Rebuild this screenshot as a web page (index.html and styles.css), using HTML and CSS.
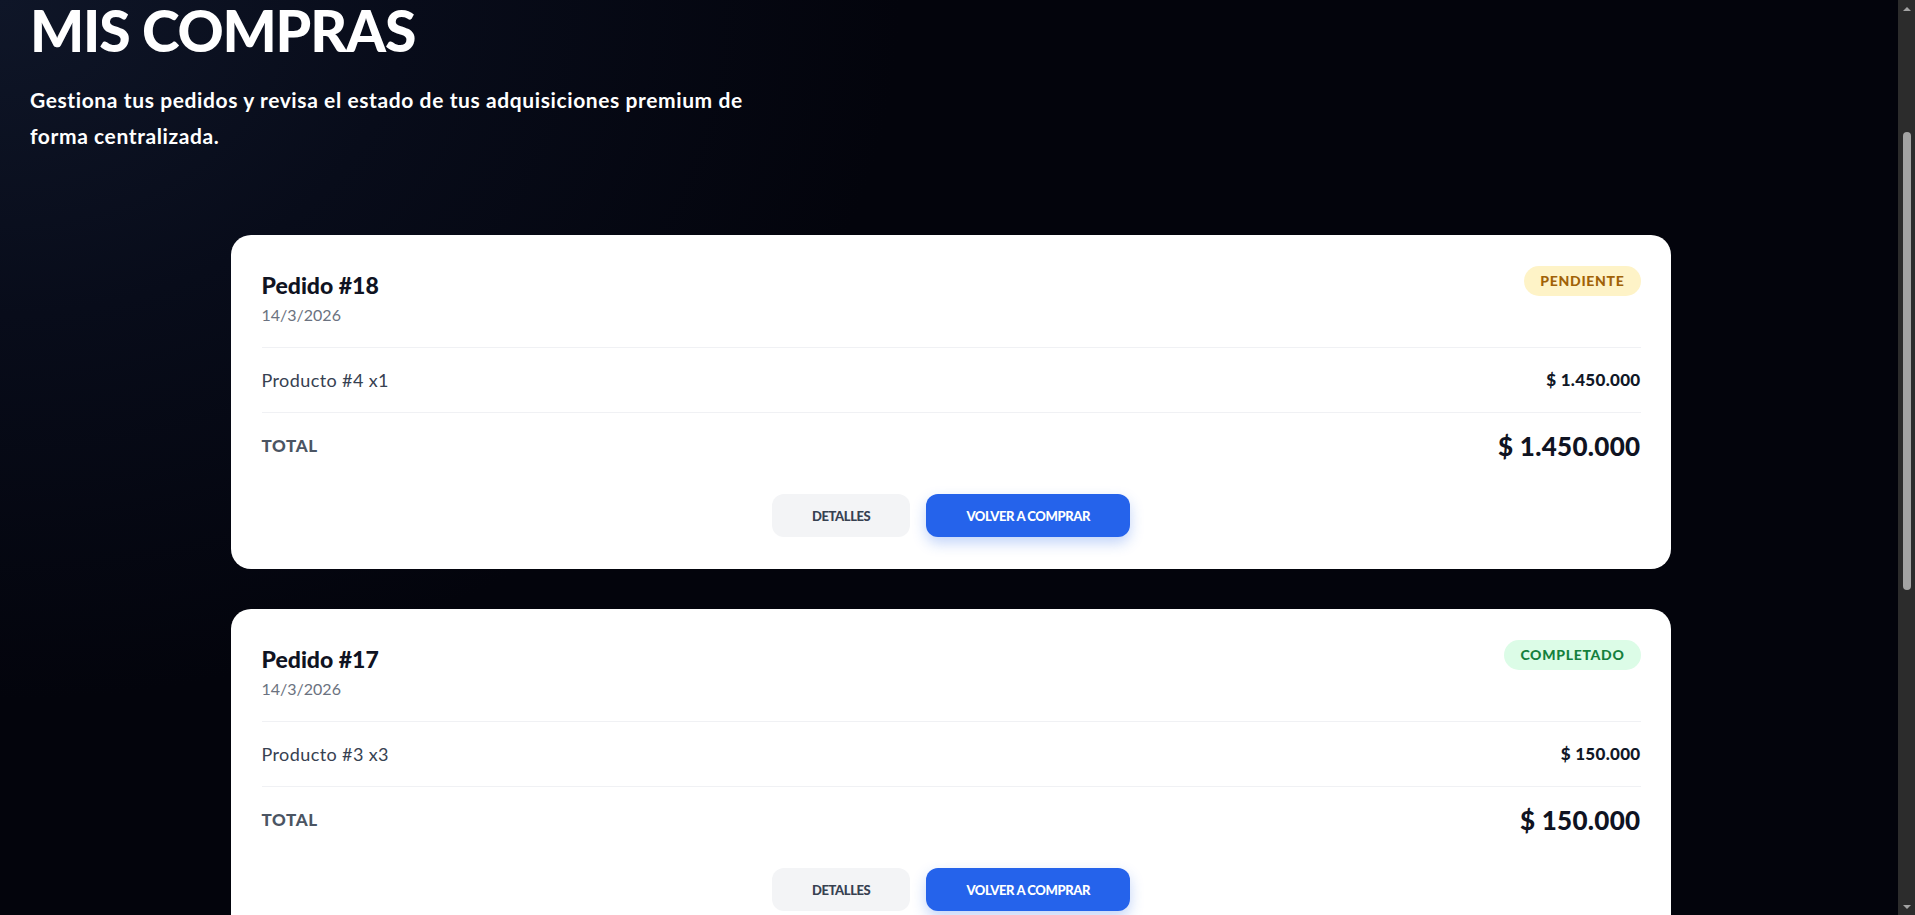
FILE: index.html
```html
<!DOCTYPE html>
<html lang="es">
<head>
<meta charset="utf-8">
<title>Mis compras</title>
<link rel="stylesheet" href="styles.css">
</head>
<body>
<main class="page">
  <header class="page-head">
    <h1 class="page-title">MIS COMPRAS</h1>
    <p class="page-lead">Gestiona tus pedidos y revisa el estado de tus adquisiciones premium de forma centralizada.</p>
  </header>

  <section class="orders">
    <article class="order">
      <div class="order-head">
        <div>
          <h2 class="order-id">Pedido #18</h2>
          <div class="order-date">14/3/2026</div>
        </div>
        <span class="badge badge-pending">PENDIENTE</span>
      </div>
      <div class="order-line">
        <span class="line-name">Producto #4 x1</span>
        <span class="line-price">$ 1.450.000</span>
      </div>
      <div class="order-total">
        <span class="total-label">TOTAL</span>
        <span class="total-price">$ 1.450.000</span>
      </div>
      <div class="order-actions">
        <button class="btn btn-soft">DETALLES</button>
        <button class="btn btn-primary">VOLVER A COMPRAR</button>
      </div>
    </article>

    <article class="order">
      <div class="order-head">
        <div>
          <h2 class="order-id">Pedido #17</h2>
          <div class="order-date">14/3/2026</div>
        </div>
        <span class="badge badge-done">COMPLETADO</span>
      </div>
      <div class="order-line">
        <span class="line-name">Producto #3 x3</span>
        <span class="line-price">$ 150.000</span>
      </div>
      <div class="order-total">
        <span class="total-label">TOTAL</span>
        <span class="total-price">$ 150.000</span>
      </div>
      <div class="order-actions">
        <button class="btn btn-soft">DETALLES</button>
        <button class="btn btn-primary">VOLVER A COMPRAR</button>
      </div>
    </article>
  </section>
</main>

<!-- window scrollbar, dark theme -->
<div class="scrollbar" aria-hidden="true">
  <span class="sb-arrow sb-up"></span>
  <span class="sb-track"><span class="sb-thumb"></span></span>
  <span class="sb-arrow sb-down"></span>
</div>
</body>
</html>
```

FILE: styles.css
```css
html {
  color-scheme: dark;
  background: #02030a;
}

body {
  margin: 0;
  min-height: 100vh;
  font-family: "Lato", "Liberation Sans", sans-serif;
  color: #ffffff;
  background:
    radial-gradient(ellipse 900px 700px at 0% 0%, #0f1628 0%, #080c1a 45%, rgba(3, 4, 12, 0) 100%),
    #03040c;
  background-attachment: fixed;
}

.page {
  margin-right: 14px;
  padding: 2px 0 260px;
}

.page-head {
  padding: 0 30px;
}

.page-title {
  margin: 0;
  font-size: 57px;
  line-height: 1;
  font-weight: 900;
  letter-spacing: -0.02em;
  color: #ffffff;
}

.page-lead {
  margin: 23px 0 0;
  max-width: 740px;
  font-size: 21px;
  line-height: 36px;
  font-weight: 700;
  letter-spacing: 0.6px;
  color: #ffffff;
}

.orders {
  max-width: 1440px;
  margin: 81px auto 0;
  display: flex;
  flex-direction: column;
  gap: 40px;
}

.order {
  background: #ffffff;
  border-radius: 20px;
  padding: 30px 30px 32px 31px;
  color: #111827;
}

.order-head {
  display: flex;
  justify-content: space-between;
  align-items: flex-start;
  padding-bottom: 22px;
  border-bottom: 1px solid #f0f1f4;
}

.order-id {
  margin: 0;
  font-size: 23px;
  line-height: 40px;
  font-weight: 900;
  color: #0f1322;
}

.order-date {
  font-size: 16px;
  line-height: 20px;
  color: #6b7280;
}

.badge {
  margin-top: 1px;
  padding: 6px 16px;
  border-radius: 999px;
  font-size: 14px;
  line-height: 18px;
  font-weight: 900;
  letter-spacing: 0.05em;
}

.badge-pending {
  background: #fef3c7;
  color: #a16207;
}

.badge-done {
  background: #dcfce7;
  color: #15803d;
}

.order-line {
  display: flex;
  justify-content: space-between;
  align-items: center;
  padding: 20px 0;
  border-bottom: 1px solid #f0f1f4;
}

.line-name {
  font-size: 18px;
  line-height: 24px;
  letter-spacing: 0.4px;
  color: #374151;
}

.line-price {
  font-size: 17px;
  line-height: 24px;
  font-weight: 900;
  letter-spacing: 0.3px;
  color: #111827;
}

.order-total {
  display: flex;
  justify-content: space-between;
  align-items: center;
  padding: 17px 0 16px;
}

.total-label {
  font-size: 17px;
  line-height: 24px;
  font-weight: 900;
  letter-spacing: 0.6px;
  color: #4b5563;
}

.total-price {
  font-size: 26px;
  line-height: 32px;
  font-weight: 900;
  letter-spacing: 0.3px;
  color: #0f1322;
}

.order-actions {
  display: flex;
  justify-content: center;
  gap: 16px;
  margin-top: 16px;
}

.btn {
  height: 43px;
  padding: 0 40px;
  border: 0;
  border-radius: 12px;
  font-family: "Lato", "Liberation Sans", sans-serif;
  font-size: 13px;
  font-weight: 900;
  letter-spacing: -0.03em;
  cursor: pointer;
}

.btn-soft {
  background: #f3f4f6;
  color: #374151;
}

.btn-primary {
  background: #2563eb;
  color: #ffffff;
  box-shadow: 0 6px 14px rgba(37, 99, 235, 0.28);
}

/* scrollbar drawn over the right edge of the window */
.scrollbar {
  position: fixed;
  top: 0;
  right: 0;
  bottom: 0;
  width: 17px;
  background: #2c2c2c;
  display: flex;
  flex-direction: column;
}

.sb-arrow {
  height: 17px;
  flex: none;
  display: flex;
  align-items: center;
  justify-content: center;
}

.sb-arrow::before {
  content: "";
  border-left: 4px solid transparent;
  border-right: 4px solid transparent;
}

.sb-up::before {
  border-bottom: 4px solid #a3a3a3;
}

.sb-down::before {
  border-top: 4px solid #a3a3a3;
}

.sb-track {
  flex: 1;
  padding: 115px 4px 0 5px;
}

.sb-thumb {
  display: block;
  height: 458px;
  border-radius: 4px;
  background: #a3a3a3;
}
```
